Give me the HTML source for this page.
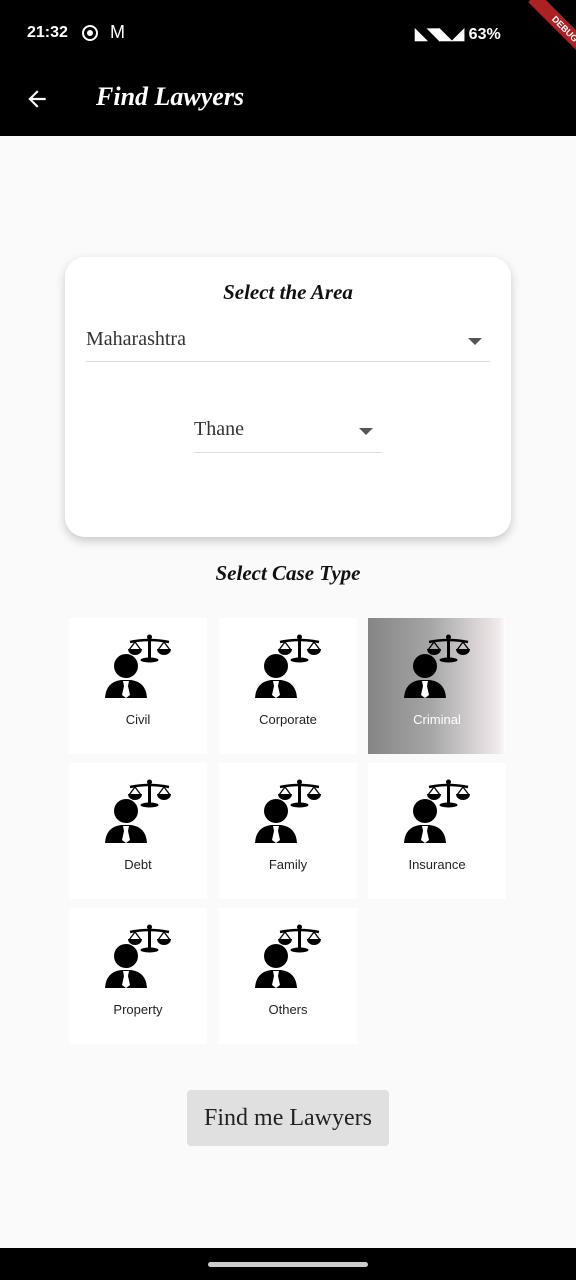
<!DOCTYPE html>
<html><head><meta charset="utf-8"><style>
*{margin:0;padding:0;box-sizing:border-box}
body{width:576px;height:1280px;background:#fafafa;position:relative;overflow:hidden;font-family:"Liberation Serif",serif}
.abs{position:absolute}
.top{left:0;top:0;width:576px;height:136px;background:#000}
.tile{position:absolute;width:138px;height:136px;background:#fff}
.tile span{position:absolute;left:0;right:0;top:94px;text-align:center;font-family:"Liberation Sans",sans-serif;font-size:13px;color:#222}
.tile svg{position:absolute;left:0;top:0}
</style></head><body>
<div class="abs top"></div>
<div class="abs" style="left:27px;top:24px;color:#fff;font:bold 16px 'Liberation Sans',sans-serif">21:32</div>
<div class="abs" style="left:82px;top:25px;width:16px;height:16px;border:2px solid #fff;border-radius:50%"></div>
<div class="abs" style="left:87px;top:30px;width:6px;height:6px;background:#fff;border-radius:50%"></div>
<div class="abs" style="left:110px;top:22px;color:#fff;font:18px 'Liberation Sans',sans-serif">M</div>
<div class="abs" style="left:415px;top:24px;color:#fff;font:bold 16px 'Liberation Sans',sans-serif">◣◥◣◢ 63%</div>
<div class="abs" style="left:520px;top:22px;width:90px;height:14px;background:#a22;transform:rotate(45deg);color:#fff;font:bold 9px 'Liberation Sans',sans-serif;text-align:center;line-height:14px">DEBUG</div>
<svg class="abs" style="left:24px;top:86px" width="26" height="26" viewBox="0 0 24 24"><path d="M20 11H7.8l5.6-5.6L12 4l-8 8 8 8 1.4-1.4L7.8 13H20z" fill="#fff"/></svg>
<div class="abs" style="left:96px;top:82px;color:#fff;font:italic bold 26px 'Liberation Serif',serif">Find Lawyers</div>

<div class="abs" style="left:65px;top:257px;width:446px;height:280px;background:#fff;border-radius:20px;box-shadow:0 4px 10px rgba(0,0,0,.2)"></div>
<div class="abs" style="left:65px;top:280px;width:446px;text-align:center;font:italic bold 21px 'Liberation Serif',serif;color:#111">Select the Area</div>
<div class="abs" style="left:86px;top:328px;font-size:20px;color:#333">Maharashtra</div>
<div class="abs" style="left:468px;top:338px;border-left:7px solid transparent;border-right:7px solid transparent;border-top:7px solid #555"></div>
<div class="abs" style="left:86px;top:361px;width:404px;height:1px;background:#ddd"></div>
<div class="abs" style="left:194px;top:418px;font-size:20px;color:#333">Thane</div>
<div class="abs" style="left:359px;top:428px;border-left:7px solid transparent;border-right:7px solid transparent;border-top:7px solid #555"></div>
<div class="abs" style="left:194px;top:452px;width:188px;height:1px;background:#ddd"></div>

<div class="abs" style="left:0;top:561px;width:576px;text-align:center;font:italic bold 21px 'Liberation Serif',serif;color:#111">Select Case Type</div>

<svg width="0" height="0" style="position:absolute"><defs><g id="ic">
<circle cx="57" cy="48" r="12" fill="#000"/>
<path d="M36 80 Q37 64 52 62 L62 62 Q77 64 78 80 Z" fill="#000"/>
<path d="M54 63 L60 63 L59 68 L61 77 L57 80 L53 77 L55 68 Z" fill="#fff"/>
<rect x="79" y="19" width="3" height="22" fill="#000"/>
<circle cx="80.5" cy="19" r="2.5" fill="#000"/>
<ellipse cx="80.5" cy="42" rx="9" ry="2.5" fill="#000"/>
<path d="M61 24 Q80 20 100 24" stroke="#000" stroke-width="2.5" fill="none"/>
<path d="M66 24 L60 32 M66 24 L72 32 M95 24 L89 32 M95 24 L101 32" stroke="#000" stroke-width="1.3"/>
<path d="M59 31 L73 31 A7 6 0 0 1 59 31 Z M88 31 L102 31 A7 6 0 0 1 88 31 Z" fill="#000"/>
</g></defs></svg>

<div class="tile" style="left:69px;top:618px"><svg width="138" height="136"><use href="#ic"/></svg><span>Civil</span></div>
<div class="tile" style="left:219px;top:618px"><svg width="138" height="136"><use href="#ic"/></svg><span>Corporate</span></div>
<div class="tile" style="left:368px;top:618px;background:linear-gradient(90deg,#858585,#a5a5a5 45%,#f2eaec 95%,#fff)"><svg width="138" height="136"><use href="#ic"/></svg><span style="color:#fff">Criminal</span></div>
<div class="tile" style="left:69px;top:763px"><svg width="138" height="136"><use href="#ic"/></svg><span>Debt</span></div>
<div class="tile" style="left:219px;top:763px"><svg width="138" height="136"><use href="#ic"/></svg><span>Family</span></div>
<div class="tile" style="left:368px;top:763px"><svg width="138" height="136"><use href="#ic"/></svg><span>Insurance</span></div>
<div class="tile" style="left:69px;top:908px"><svg width="138" height="136"><use href="#ic"/></svg><span>Property</span></div>
<div class="tile" style="left:219px;top:908px"><svg width="138" height="136"><use href="#ic"/></svg><span>Others</span></div>

<div class="abs" style="left:187px;top:1090px;width:202px;height:56px;background:#e0e0e0;border-radius:4px;text-align:center;line-height:56px;font-size:24px;color:#222">Find me Lawyers</div>

<div class="abs" style="left:0;top:1248px;width:576px;height:32px;background:#000"></div>
<div class="abs" style="left:208px;top:1262px;width:160px;height:5px;background:#ccc;border-radius:3px"></div>
</body></html>
